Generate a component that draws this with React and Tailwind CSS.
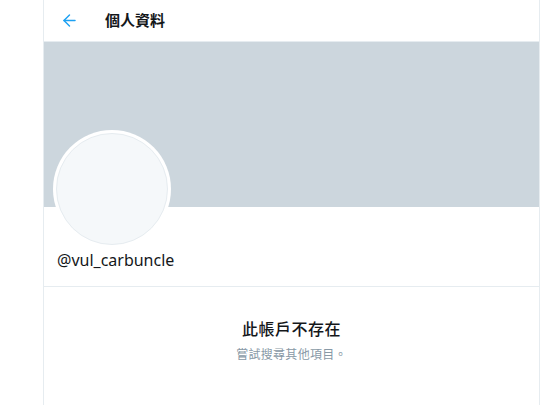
import { ArrowLeft } from "lucide-react";

export default function App() {
  const cjk = { fontFamily: '"Noto Sans", "Noto Sans CJK TC", sans-serif' };

  return (
    <div className="w-[554px] h-[405px] bg-white overflow-hidden" style={cjk}>
      <div className="ml-[43px] w-[497px] h-full border-x border-[#e6ecf0] flex flex-col">
        {/* header */}
        <div className="h-[42px] border-b border-[#e6ecf0] flex items-center shrink-0">
          <ArrowLeft className="ml-[16px] w-[19px] h-[19px] text-[#1da1f2]" strokeWidth={1.8} />
          <span className="ml-[26px] text-[15px] font-semibold text-[#14171a] leading-none">個人資料</span>
        </div>

        {/* banner */}
        <div className="h-[165px] bg-[#ccd6dd] shrink-0" />

        {/* profile */}
        <div className="px-[9px] border-b border-[#e6ecf0] pb-[16px]">
          <div className="-mt-[77px] w-[118px] h-[118px] rounded-full bg-white p-[3px]">
            <div className="w-full h-full rounded-full bg-[#f5f8fa] border border-[#e6ecf0]" />
          </div>
          <div className="mt-[2px] ml-[4px] text-[16px] text-[#14171a] leading-[20px]">@vul_carbuncle</div>
        </div>

        {/* empty state */}
        <div className="flex flex-col items-center pt-[32px]">
          <div className="text-[16px] font-medium text-[#14171a] leading-[20px] tracking-[0.5px]">此帳戶不存在</div>
          <div className="mt-[8px] text-[12px] text-[#8899a6] leading-[16px] tracking-[0.3px]">嘗試搜尋其他項目。</div>
        </div>
      </div>
    </div>
  );
}
